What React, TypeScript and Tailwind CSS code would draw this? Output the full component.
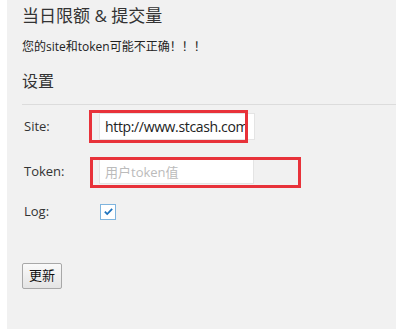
export default function App() {
  return (
    <div className="relative h-[335px] w-[405px] bg-white font-['Open_Sans','Noto_Sans_CJK_SC',sans-serif] text-[#333]">
      <div className="relative ml-[7px] h-[329px] w-[389px] bg-[#f1f1f1]">
        <h1 className="pl-[15px] pt-[5px] text-[17px] leading-[22px] text-[#333]">当日限额 &amp; 提交量</h1>
        <p className="mt-[13px] pl-[15px] text-[12px] leading-[14px] text-[#222]">您的site和token可能不正确！！！</p>
        <h2 className="mt-[17px] pl-[15px] text-[16px] leading-[20px] text-[#333]">设置</h2>
        <div className="ml-[15px] mt-[13px] h-px bg-[#dcdcdc]" />

        <div className="mt-[8px] flex items-center pl-[17px]">
          <span className="w-[75px] text-[13px] text-[#333]">Site:</span>
          <input
            className="h-[27px] w-[156px] border border-[#e4e4e4] bg-white px-[5px] text-[14px] tracking-[-0.35px] text-[#222] outline-none"
            defaultValue="http://www.stcash.com"
          />
        </div>
        <div className="mt-[19px] flex items-center pl-[17px]">
          <span className="w-[75px] text-[13px] text-[#333]">Token:</span>
          <input
            className="h-[25px] w-[155px] border border-[#e4e4e4] bg-white px-[5px] text-[13px] text-[#222] outline-none placeholder:text-[#bbb]"
            placeholder="用户token值"
          />
        </div>
        <div className="mt-[18px] flex items-center pl-[17px]">
          <span className="w-[76px] text-[13px] text-[#333]">Log:</span>
          <span className="flex h-[16px] w-[16px] items-center justify-center border border-[#7eb4de] bg-white">
            <svg viewBox="0 0 12 12" className="h-[11px] w-[11px]">
              <path d="M2 6.2l2.6 2.6L10 3.2" fill="none" stroke="#1e73be" strokeWidth="2" />
            </svg>
          </span>
        </div>
        <button className="ml-[15px] mt-[41px] h-[26px] w-[40px] rounded-[2px] border border-[#a8a8a8] bg-gradient-to-b from-[#fafafa] to-[#e4e4e4] text-[13px] text-[#111]">
          更新
        </button>

        <div className="absolute left-[82px] top-[110px] h-[33px] w-[159px] border-[3px] border-[#e8323a]" />
        <div className="absolute left-[83px] top-[157px] h-[31px] w-[211px] border-[3px] border-[#e8323a]" />
      </div>
    </div>
  );
}
